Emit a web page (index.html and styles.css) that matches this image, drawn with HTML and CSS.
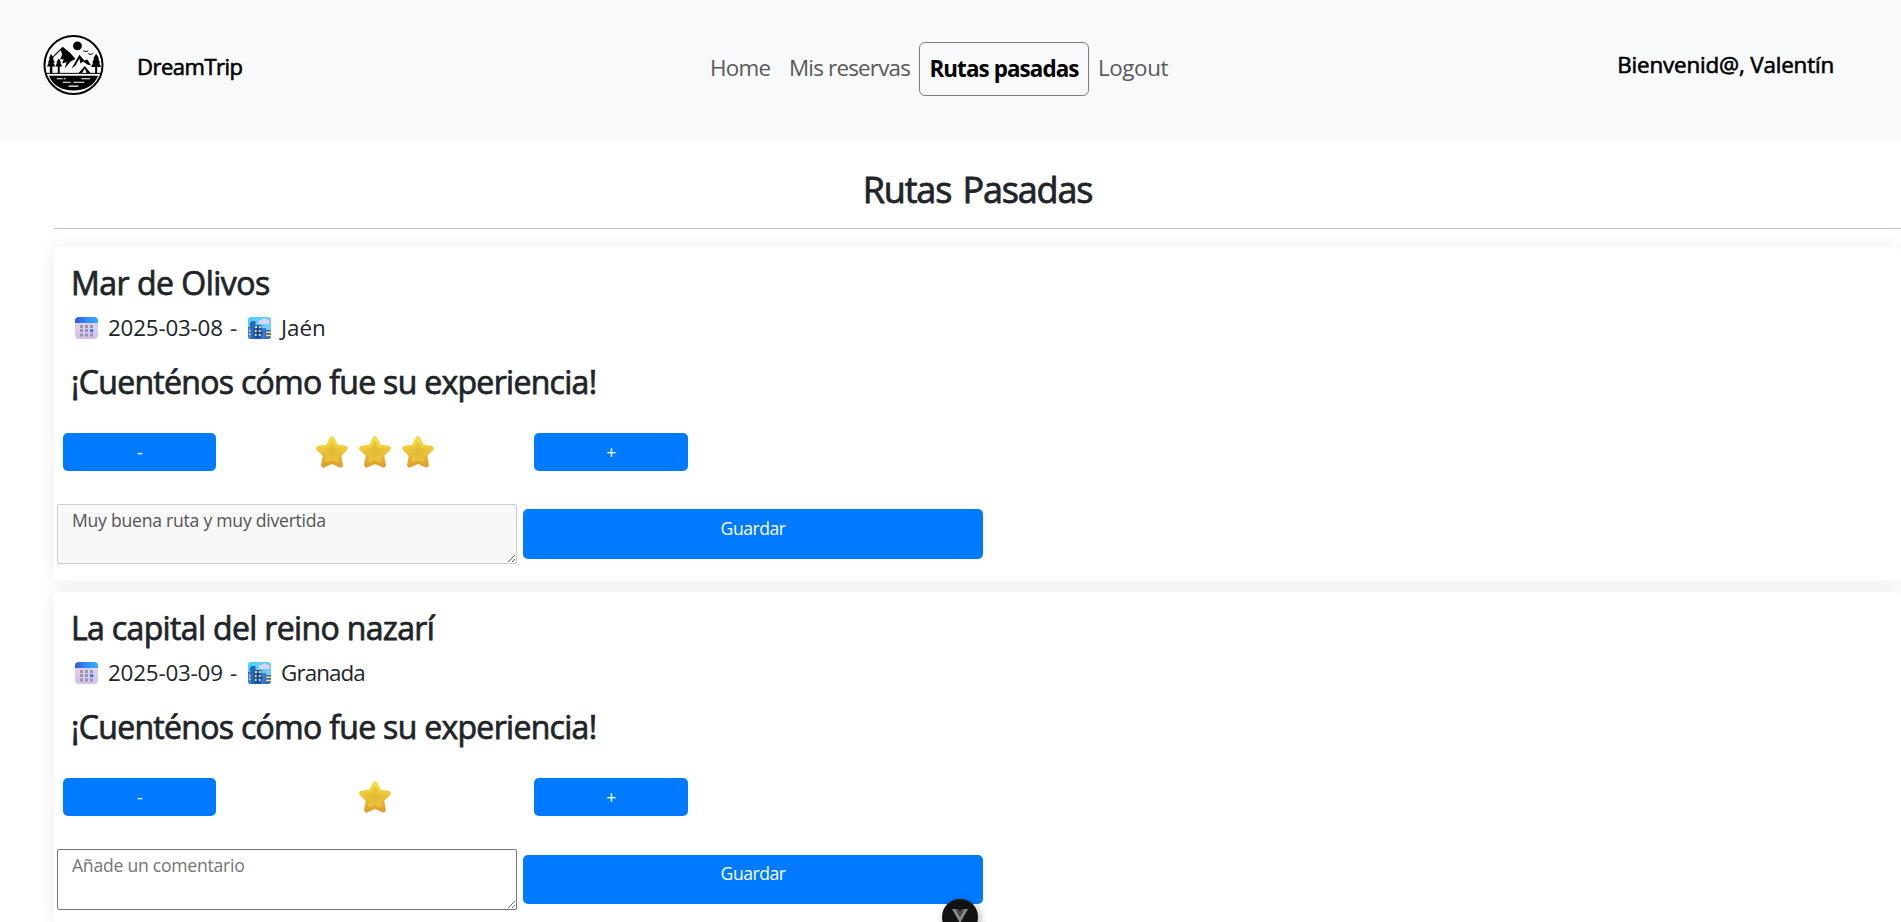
FILE: index.html
```html
<!DOCTYPE html>
<html lang="es">
<head>
<meta charset="utf-8">
<title>DreamTrip</title>
<link rel="stylesheet" href="styles.css">
</head>
<body>
<svg width="0" height="0" class="defs">
  <defs>
    <linearGradient id="gcal" x1="0" x2="1"><stop offset="0" stop-color="#3557d6"/><stop offset=".5" stop-color="#2f8cf5"/><stop offset="1" stop-color="#35b0fb"/></linearGradient>
    <linearGradient id="gpage" x1="0" y1="0" x2="0" y2="1"><stop offset="0" stop-color="#e2daf0"/><stop offset="1" stop-color="#d5bfe8"/></linearGradient>
    <linearGradient id="gsky" x1="0" y1="0" x2="1" y2="1"><stop offset="0" stop-color="#45d3f8"/><stop offset="1" stop-color="#8cc6fb"/></linearGradient>
    <linearGradient id="gstar" x1="0" y1="0" x2="0" y2="1"><stop offset="0" stop-color="#f6dc45"/><stop offset=".45" stop-color="#ecc638"/><stop offset="1" stop-color="#dda12f"/></linearGradient>
    <radialGradient id="gstar2"><stop offset="0" stop-color="#dfb83a"/><stop offset="1" stop-color="#eec537"/></radialGradient>
    <symbol id="cal" viewBox="0 0 23 23">
      <rect width="23" height="22" rx="4" fill="url(#gpage)"/><path d="M0 6V4a4 4 0 0 1 4-4h15a4 4 0 0 1 4 4v2z" fill="url(#gcal)"/>
      <path d="M5 8h3v3H5zM10 8h3v3h-3zM15 8h3v3h-3zM5 12h3v3H5zM10 12h3v3h-3zM5 16.500h3v3H5zM10 16.500h3v3h-3zM15 16.500h3v3h-3z" fill="#9a93ac"/><rect x="15" y="12" width="3.200" height="3.200" rx=".8" fill="#1b84ee"/>
    </symbol>
    <symbol id="city" viewBox="0 0 23 23">
      <rect width="23" height="22" rx="3" fill="url(#gsky)"/>
      <path d="M10.500 5a2.300 2.300 0 0 1 3-2 3.500 3.500 0 0 1 6 0 2 2 0 0 1 .5 4h-8a2 2 0 0 1-1.500-2z" fill="#dcd3fa"/>
      <path d="M2 5.500 4 4h3.500v5H13v13H3a3 3 0 0 1-3-3v-9h2z" fill="#2569bb"/><path d="M12.500 11H18v11h-5.500z" fill="#397bd0"/><path d="M6 8h7.500v14H6z" fill="#2459ad"/><path d="M0 11h3v11a3 3 0 0 1-3-3z" fill="#4d7fd8"/><path d="M17 13h6v6a3 3 0 0 1-3 3h-3z" fill="#3867bd"/>
      <path d="M7 9h2v2H7zM11 9h1.800v2H11zM7 13h1.500v2H7zM11 13h1.500v2H11zM7 17h1.500v2H7zM11 17h1.500v2H11zM1 13h1.500v1.500H1zM1 16.500h1.500V18H1zM18 14.500h5V16h-5zM18 17.800h5v1.500h-5z" fill="#f5df72"/>
      <path d="M9 11h1.500v2H9zM9 15h1.500v2H9zM13 15h1.500v2H13zM9 19h1.500v2H9z" fill="#153b78"/>
    </symbol>
    <symbol id="star" viewBox="0 0 32 32">
      <path d="M16 2.800 19.900 11.200 29.200 12.300 22.500 18.900 24.300 29 16 25.200 7.700 29 9.500 18.900 2.800 12.300 12.100 11.200z" fill="url(#gstar)" stroke="url(#gstar)" stroke-width="5.200" stroke-linejoin="round"/>
      <path d="M16 6 19 12.200 26.500 13.500 21 19 22 26 16 23.500 10 26 11 19 5.500 13.500 13 12.200z" fill="url(#gstar2)" stroke="#e9c23a" stroke-width="1" stroke-linejoin="round"/>
    </symbol>
  </defs>
</svg>

<header class="topbar">
  <div class="brand">
    <svg class="logo" viewBox="0 0 62 62">
      <circle cx="31" cy="30.500" r="29.500" fill="#f8f9fb" stroke="#000" stroke-width="2"/>
      <circle cx="35" cy="11" r="4.500"/>
      <path d="M9 22.500 20 12 28 18.500 33 24.500 28 27 22 34 24 27.500 19.500 29 21 24.500 17.500 25 19.500 19.500 18 15.500 10 23z"/>
      <path d="M29 34 37 20 42 26 45 25 49 31 45 30 41 27 38 29 37 24 33 31z"/>
      <path d="M41 16l3 1 2-1M46 19l3 1 2-2" fill="none" stroke="#000"/>
      <path d="M8 19l3 5-1 0 2 4-1.500 0 2 4-3 0v7H7v-7H4l2-4H5l2-4H6zM16 24l2.500 4-1 0 2 4-2.500 0v7h-2v-7h-2.500l2-4-1 0zM54 19l3 5-1 0 2 4-1 0 2 4.500-4 0v7h-2v-7h-4l2-4.500-1 0 2-4-1 0z"/>
      <path d="M36 39 42.500 31.500 48.500 39h-4l-2-5-3 5z"/><path d="M3 39h56" stroke="#000"/>
      <path d="M6 41.500h50c-4 10-13 15-25 15S10 51.500 6 41.500z"/>
      <path d="M14 44.500h6M21 44.500h2M39 44.500h9M20 48h8M31 48h11M26 52h10" stroke="#fff" stroke-width="1.200"/>
    </svg>
    <span class="brand-name">DreamTrip</span>
  </div>
  <nav class="menu">
    <a class="home">Home</a><a class="reservas">Mis reservas</a><a class="active"><span>Rutas pasadas</span></a><a class="logout">Logout</a>
  </nav>
  <div class="welcome">Bienvenid@, Valentín</div>
</header>

<main class="content">
  <h1 class="title"><span>Rutas Pasadas</span></h1>
  <hr class="rule">
  <section class="card">
    <h2 class="route">Mar de Olivos</h2>
    <p class="meta"><svg class="emoji"><use href="#cal"/></svg><span class="date">2025-03-08 -</span><svg class="emoji"><use href="#city"/></svg><span class="place">Jaén</span></p>
    <h2 class="ask">¡Cuenténos cómo fue su experiencia!</h2>
    <div class="rating">
      <button class="btn minus">-</button>
      <div class="stars"><svg><use href="#star"/></svg><svg><use href="#star"/></svg><svg><use href="#star"/></svg></div>
      <button class="btn">+</button>
    </div>
    <div class="comment">
      <textarea class="saved" disabled>Muy buena ruta y muy divertida</textarea>
      <button class="btn save">Guardar</button>
    </div>
  </section>
  <section class="card">
    <h2 class="route long">La capital del reino nazarí</h2>
    <p class="meta"><svg class="emoji"><use href="#cal"/></svg><span class="date">2025-03-09 -</span><svg class="emoji"><use href="#city"/></svg><span class="place long">Granada</span></p>
    <h2 class="ask">¡Cuenténos cómo fue su experiencia!</h2>
    <div class="rating">
      <button class="btn minus">-</button>
      <div class="stars"><svg><use href="#star"/></svg></div>
      <button class="btn">+</button>
    </div>
    <div class="comment">
      <textarea placeholder="Añade un comentario"></textarea>
      <button class="btn save">Guardar</button>
    </div>
  </section>
</main>
<div class="devtools"><svg viewBox="0 0 16 14"><path d="M0 0h3.500L8 8l4.500-8H16L8 14z" fill="#8b8b8b"/><path d="M3.500 0H6.500L8 2.700 9.500 0h3L8 8z" fill="#4d4d4d"/></svg></div>
</body>
</html>
```
FILE: styles.css
```css
* { box-sizing: border-box; }
html, body { height: 100%; overflow: hidden; }
body { margin: 0; font-family: "Open Sans", "Noto Sans", sans-serif; color: #212529; background: #fff; }
.defs { display: block; width: 0; height: 0; }
.topbar { height: 140px; background: #f8f9fb; display: grid; grid-template-columns: 710px 1fr auto; align-items: start; padding-right: 67px; color: #000; }
.brand { display: flex; padding: 35px 0 0 43px; }
.logo { width: 61px; height: 61px; }
.brand-name { margin-left: 33px; padding-top: 15px; font-size: 22px; line-height: 32px; letter-spacing: -.5px; -webkit-text-stroke: .6px; }
.menu { display: flex; align-items: flex-start; padding-top: 42px; font-size: 22.400px; line-height: 34px; color: #595a5c; white-space: nowrap; }
.menu a { padding-top: 9px; }
.home { width: 79px; letter-spacing: -.7px; }
.reservas { width: 130px; letter-spacing: -.8px; }
.menu .active { width: 170px; height: 54px; border: 1px solid #7b7d80; border-radius: 6px; text-align: center; color: #000; font-weight: 700; letter-spacing: -.9px; }
.logout { margin-left: 9px; letter-spacing: -.4px; }
.welcome { padding-top: 48px; font-size: 22.400px; line-height: 34px; letter-spacing: -.17px; white-space: nowrap; -webkit-text-stroke: .6px; }
.content { padding-left: 54px; }
.title { margin: 0; padding: 28px 0 16px; text-align: center; font-size: 36px; line-height: 44px; font-weight: 400; letter-spacing: -1.150px; word-spacing: 3px; -webkit-text-stroke: .8px; }
.rule { margin: 0 0 18px; border: 0; height: 1px; background: #c7c8c9; }
.card { height: 334px; margin-bottom: 11.200px; padding-top: 17px; border-radius: 5px; background: #fff; box-shadow: 0 0 20px rgba(0,0,0,.08); }
.card h2 { margin: 0 0 0 17px; font-size: 32px; line-height: 38px; font-weight: 400; white-space: nowrap; letter-spacing: -.5px; -webkit-text-stroke: .75px; }
.card h2.ask { letter-spacing: -.7px; }
.card h2.long { letter-spacing: -.65px; }
.meta { display: flex; align-items: flex-start; margin: 9px 0 18px 21px; height: 34px; font-size: 22.400px; line-height: 34px; white-space: nowrap; }
.emoji { width: 23px; height: 23px; margin-top: 6px; }
.date { width: 150px; padding-left: 10px; letter-spacing: -.2px; word-spacing: 1.500px; }
.place { padding-left: 10px; }
.place.long { letter-spacing: -.9px; }
.rating { display: flex; align-items: center; margin: 31px 0 0 9px; height: 39px; }
.btn { width: 154px; height: 38px; padding: 0; border: 0; border-radius: 5px; background: #007bff; color: #fff; font: 17.600px/26px "Open Sans", "Noto Sans", sans-serif; letter-spacing: -.5px; }
.minus { width: 153px; }
.stars { width: 318px; display: flex; justify-content: center; gap: 11px; }
.stars svg { width: 32px; height: 32px; }
.comment { display: flex; align-items: center; gap: 6px; margin: 33px 0 0 3px; }
.comment textarea { width: 460px; height: 60.400px; margin: 0; padding: 2px 14px; border: 1px solid #767676; border-radius: 2px; background: #fff; color: #545454; font: 17.600px/26px "Open Sans", "Noto Sans", sans-serif; letter-spacing: -.25px; resize: both; }
.comment textarea.saved { border-color: #ccc; background: #f8f8f8; }
.comment textarea::placeholder { color: #757575; opacity: 1; }
.save { width: 460px; height: 49.600px; padding-bottom: 12px; }
.devtools { position: absolute; left: 942px; top: 899px; width: 36px; height: 36px; border-radius: 50%; background: #121212; box-shadow: 2px 2px 8px rgba(0,0,0,.3); }
.devtools svg { display: block; width: 16px; height: 14px; margin: 10px auto 0; }
```
